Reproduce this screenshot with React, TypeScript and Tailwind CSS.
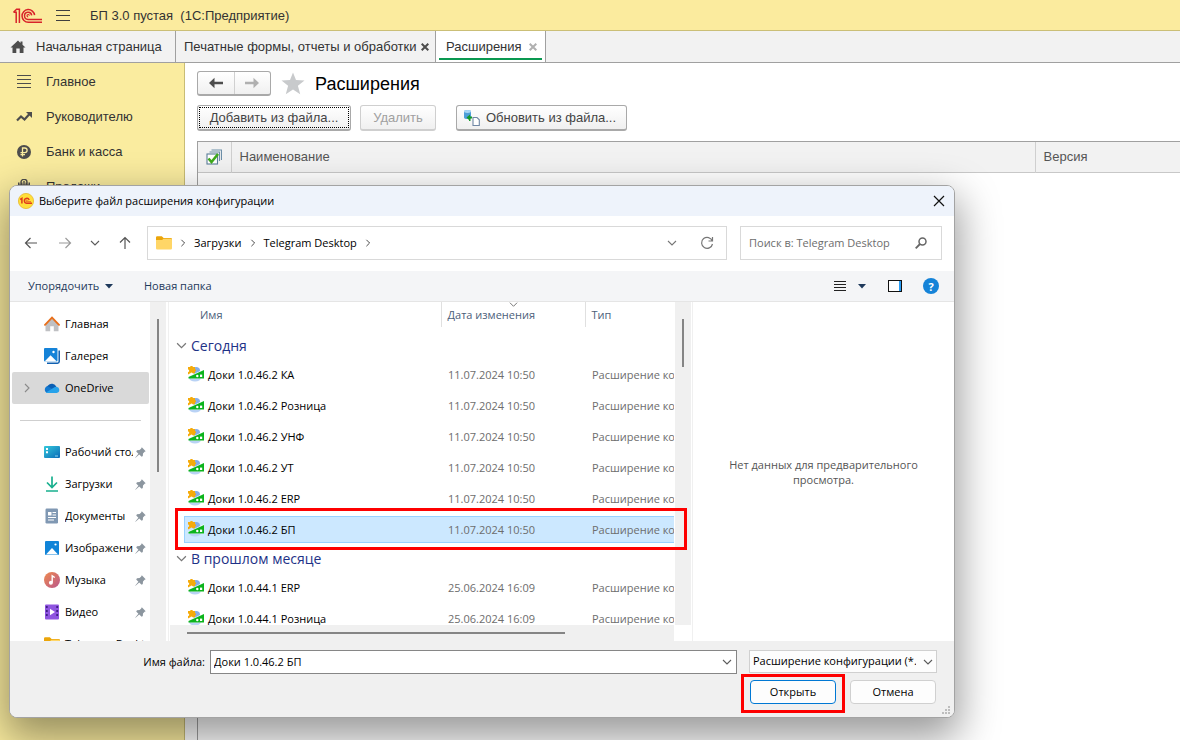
import type { ReactNode } from "react"
import { clsx } from "clsx"

interface FileRow {
  readonly name: string
  readonly date: string
  readonly selected?: boolean
}

interface FileGroup {
  readonly title: string
  readonly files: readonly FileRow[]
}

const GROUPS: readonly FileGroup[] = [
  {
    title: "Сегодня",
    files: [
      { name: "Доки 1.0.46.2 КА", date: "11.07.2024 10:50" },
      { name: "Доки 1.0.46.2 Розница", date: "11.07.2024 10:50" },
      { name: "Доки 1.0.46.2 УНФ", date: "11.07.2024 10:50" },
      { name: "Доки 1.0.46.2 УТ", date: "11.07.2024 10:50" },
      { name: "Доки 1.0.46.2 ERP", date: "11.07.2024 10:50" },
      { name: "Доки 1.0.46.2 БП", date: "11.07.2024 10:50", selected: true },
    ],
  },
  {
    title: "В прошлом месяце",
    files: [
      { name: "Доки 1.0.44.1 ERP", date: "25.06.2024 16:09" },
      { name: "Доки 1.0.44.1 Розница", date: "25.06.2024 16:09" },
    ],
  },
]

/* ---------- icons ---------- */

function Logo1C() {
  return (
    <svg width="30" height="16" viewBox="0 0 30 16" fill="none" stroke="#d8232a" strokeWidth="1.5">
      <path d="M0.5 4.2H3.2V15M0.5 4.2L3.6 1.2H6.4V15" />
      <path d="M21.6 7.2A6.3 6.3 0 1 0 15.3 14.2H29" />
      <path d="M18.7 7.4A3.6 3.6 0 1 0 15.3 11.4H29" />
      <path d="M16.4 7.6A1.2 1.2 0 1 0 15.2 8.9" strokeWidth="1.2" />
    </svg>
  )
}

function Chevron({ dir, size = 10, color = "#5c5c5c" }: { dir: "down" | "up" | "right"; size?: number; color?: string }) {
  const d = { down: "M1 3l4 4 4-4", up: "M1 7l4-4 4 4", right: "M3 1l4 4-4 4" }[dir]
  return (
    <svg width={size} height={size} viewBox="0 0 10 10" fill="none" stroke={color} strokeWidth="1.1">
      <path d={d} />
    </svg>
  )
}

function ThinArrow({ dir, color }: { dir: "left" | "right" | "up"; color: string }) {
  const d = {
    left: "M13 7H1.5M6.5 2L1.5 7l5 5",
    right: "M1 7h11.500M7.500 2l5 5-5 5",
    up: "M7 13V1.5M2 6.500l5-5 5 5",
  }[dir]
  return (
    <svg width="14" height="14" viewBox="0 0 14 14" fill="none" stroke={color} strokeWidth="1.2">
      <path d={d} />
    </svg>
  )
}

function BoldArrow({ flip = false, color }: { flip?: boolean; color: string }) {
  return (
    <svg width="14" height="12" viewBox="0 0 14 12" fill={color}>
      <path d={flip ? "M14 6L8.500 0.800V4.800H0v2.400h8.500v4z" : "M0 6l5.500-5.200V4.800H14v2.400H5.500v4z"} />
    </svg>
  )
}

function Cross({ color }: { color: string }) {
  return (
    <svg width="8" height="8" viewBox="0 0 8 8" stroke={color} strokeWidth="2">
      <path d="M0.700 0.700l6.600 6.600M7.300 0.700L0.700 7.300" />
    </svg>
  )
}

function FolderIcon() {
  return (
    <svg width="16" height="14" viewBox="0 0 16 14" className="shrink-0">
      <path d="M0 1.500A1.200 1.200 0 0 1 1.200 0.300h4.600l1.800 1.700h7.200A1.200 1.200 0 0 1 16 3.200V6H0z" fill="#eba50a" />
      <path d="M0 4h6l1.500-1.300h7.300A1.200 1.200 0 0 1 16 3.900v8.300a1.200 1.200 0 0 1-1.200 1.200H1.200A1.200 1.200 0 0 1 0 12.200z" fill="#ffd667" />
    </svg>
  )
}

function ExtensionIcon() {
  return (
    <svg width="16" height="16" viewBox="0 0 16 16" className="mb-[2px] shrink-0">
      <ellipse cx="7" cy="12" rx="6" ry="3.500" fill="#b9d2f5" />
      <ellipse cx="8" cy="4.500" rx="4" ry="3.500" fill="#86aee8" />
      <path d="M0 10.800L16 3.200v9.400H3z" fill="#fff" />
      <path d="M0.500 10.900L16 4v8.400H0.500z" fill="#0cb41c" />
      <circle cx="9.300" cy="10" r="1.200" fill="#fff" />
      <rect x="12" y="8.600" width="2.200" height="2.400" fill="#fff" />
      <path d="M0 1h2.200a1.300 1.300 0 0 1 2.600 0H7v2a1.400 1.400 0 0 1 0 2.700V7.300H4.600a1.200 1.200 0 0 0-2.200 0L0 8.600V6a1.200 1.200 0 0 0 0-2.400z" fill="#f5ab0b" />
    </svg>
  )
}

function HomeColorIcon() {
  return (
    <svg width="16" height="16" viewBox="0 0 16 16">
      <path d="M1.500 8L8 2l6.500 6v7.300H9.800v-5H6.200v5H1.500z" fill="#bfc0c3" />
      <path d="M1 8.800L8 1.600l7 7.200" fill="none" stroke="#e8701c" strokeWidth="1.900" strokeLinecap="round" />
    </svg>
  )
}

function GalleryIcon() {
  return (
    <svg width="16" height="16" viewBox="0 0 16 16">
      <path d="M3 15.200h10.500a1.700 1.700 0 0 0 1.700-1.700V2.500" fill="none" stroke="#0f5fb0" strokeWidth="1.500" />
      <rect width="13.500" height="13.500" rx="1" fill="#1583d8" />
      <path d="M0.600 13.500l6-6.200 6.200 6.200z" fill="#fff" />
      <circle cx="9.500" cy="4" r="1.200" fill="#fff" />
    </svg>
  )
}

function OneDriveIcon() {
  return (
    <svg width="16" height="16" viewBox="0 0 16 16">
      <path d="M4 12.500A4 4 0 0 1 4 5.500a4.800 4.800 0 0 1 8.300 1.300L8 10z" fill="#0a5fb4" />
      <path d="M3.500 13A3.400 3.400 0 0 1 3.800 6.300L10 10z" fill="#1278cf" />
      <path d="M2 12.400l8-5a4 4 0 0 1 2.600-.7A3.200 3.200 0 0 1 12.700 13H3.700A3 3 0 0 1 2 12.400z" fill="#26a2ea" />
    </svg>
  )
}

function DesktopIcon() {
  return (
    <svg width="16" height="16" viewBox="0 0 16 16">
      <defs>
        <linearGradient id="desk" x1="0" y1="0" x2="1" y2="1">
          <stop offset="0" stopColor="#35c9db" />
          <stop offset="1" stopColor="#0a6ab8" />
        </linearGradient>
      </defs>
      <rect y="2" width="16" height="12" rx="1" fill="url(#desk)" />
      <path d="M2 4h2v2H2zM2 7.300h2v2H2z" fill="#fff" />
      <path d="M11 12h3" stroke="#8fd5f0" strokeWidth="1" />
    </svg>
  )
}

function DownloadIcon() {
  return (
    <svg width="16" height="16" viewBox="0 0 16 16" fill="none" stroke="#19b08f" strokeWidth="1.700">
      <path d="M8 0.500V11M3 6.500l5 5 5-5M2 15h12" />
    </svg>
  )
}

function DocumentsIcon() {
  return (
    <svg width="16" height="16" viewBox="0 0 16 16">
      <rect x="1.500" y="0.500" width="12.500" height="15" rx="1.200" fill="#8098b3" />
      <path d="M4 4h3.500v3.500H4z" fill="#fff" />
      <path d="M8.500 4.500H12M8.500 7H12M4 9.500h8M4 12h6" stroke="#fff" strokeWidth="1" />
    </svg>
  )
}

function PicturesIcon() {
  return (
    <svg width="16" height="16" viewBox="0 0 16 16">
      <rect x="1" y="1" width="14" height="14" rx="1" fill="#1184d8" />
      <path d="M2 14.500L8 8l6 6.500z" fill="#fff" />
      <circle cx="11.500" cy="4.500" r="1.100" fill="#fff" />
    </svg>
  )
}

function MusicIcon() {
  return (
    <svg width="16" height="16" viewBox="0 0 16 16">
      <defs>
        <linearGradient id="mus" x1="0" y1="0" x2="1" y2="1">
          <stop offset="0" stopColor="#ef8a4e" />
          <stop offset="1" stopColor="#b9578d" />
        </linearGradient>
      </defs>
      <circle cx="8" cy="8" r="8" fill="url(#mus)" />
      <path d="M8.200 10.500V3.800l2.600 1.700" fill="none" stroke="#fff" strokeWidth="1.400" />
      <circle cx="6.900" cy="10.700" r="2" fill="#fff" />
    </svg>
  )
}

function VideoIcon() {
  return (
    <svg width="16" height="16" viewBox="0 0 16 16">
      <rect x="1" y="0.500" width="14" height="15" rx="1" fill="#8f55e0" />
      <path d="M2.800 2v12M13.200 2v12" stroke="#3f1f86" strokeWidth="1.800" strokeDasharray="2 2" />
      <path d="M6 4.800v6.400L11 8z" fill="#fff" />
    </svg>
  )
}

function PinIcon() {
  return (
    <svg width="11" height="11" viewBox="0 0 11 11" fill="#8c969f">
      <path d="M6.800 0.300L10.700 4.200 9.600 4.800 8 6.400 7.800 9 6.700 9.800 4.200 7.500 0.600 10.700 0.300 10.400 3.400 6.700 1.200 4.400 2 3.200 4.600 3 6.200 1.400z" />
    </svg>
  )
}

function OneCBadge() {
  return (
    <svg width="16" height="16" viewBox="0 0 16 16">
      <circle cx="8" cy="8" r="7.600" fill="#ffdf3a" stroke="#e8b92b" strokeWidth="0.800" />
      <path d="M2.200 6.500l1.700-1.100v5.200" fill="none" stroke="#e03a1c" strokeWidth="1.500" />
      <path d="M11.200 6.900A2.500 2.500 0 1 0 9 10.300h5" fill="none" stroke="#e03a1c" strokeWidth="1.400" />
      <path d="M9.700 7.500A0.900 0.900 0 1 0 9 8.700h4" fill="none" stroke="#e03a1c" strokeWidth="0.700" />
    </svg>
  )
}

/* ---------- main window ---------- */

const SECTIONS: readonly { label: string; icon: ReactNode }[] = [
  {
    label: "Главное",
    icon: <path d="M1 1.500h14M1 5.500h14M1 9.500h14M1 13.500h14" stroke="#4d4d4d" strokeWidth="1" fill="none" />,
  },
  {
    label: "Руководителю",
    icon: (
      <>
        <path d="M1 11.500l4-4 3.500 3L13.500 5" fill="none" stroke="#4d4d4d" strokeWidth="2.200" />
        <path d="M10 3h6v6z" fill="#4d4d4d" />
      </>
    ),
  },
  {
    label: "Банк и касса",
    icon: (
      <>
        <circle cx="8" cy="8" r="7" fill="#4d4d4d" />
        <path d="M6.500 12.500V4h2.300a2.300 2.300 0 0 1 0 4.600H4.500M4.500 10.600h4.500" fill="none" stroke="#faec9f" strokeWidth="1.300" />
      </>
    ),
  },
  {
    label: "Продажи",
    icon: (
      <>
        <path d="M2 3.500h1.500v2H5v-2h1.500v2h3v-2H11v2h1.500v-2H14V14H2z" fill="#4d4d4d" />
        <path d="M5 6V3a3 2.600 0 0 1 6 0v3M8 2v5" fill="none" stroke="#4d4d4d" strokeWidth="1.400" />
      </>
    ),
  },
]

function TopBar() {
  return (
    <header className="flex h-[31px] items-center border-b border-[#cbbf77] bg-[#fbeb9e] pl-[13px] pt-px">
      <Logo1C />
      <button type="button" aria-label="Меню" className="ml-[13px]">
        <svg width="14" height="12" viewBox="0 0 14 12" stroke="#3f3f3f" strokeWidth="1">
          <path d="M0 0.500h14M0 5.500h14M0 10.500h14" />
        </svg>
      </button>
      <span className="ml-5 whitespace-pre text-[13px] text-[#333]">БП 3.0 пустая  (1С:Предприятие)</span>
    </header>
  )
}

function TabBar() {
  return (
    <nav className="flex h-8 border-b border-[#a0a0a0] bg-[#f2f2f2] text-[13px] text-[#333]">
      <button type="button" className="flex w-44 items-center gap-[10px] whitespace-nowrap border-r border-[#a0a0a0] pl-[10px]">
        <svg width="16" height="14" viewBox="0 0 16 14" fill="#4d4d4d">
          <path d="M8 0.500L0.500 7.500h2V13h3.800V8.500h3.400V13h3.800V7.500h2L12.500 4.700V1.500h-2v1.400z" />
        </svg>
        Начальная страница
      </button>
      <div className="flex w-[260px] items-center justify-between whitespace-nowrap border-r border-[#a0a0a0] pl-2 pr-[6px]">
        <button type="button">Печатные формы, отчеты и обработки</button>
        <button type="button" aria-label="Закрыть вкладку">
          <Cross color="#4d4d4d" />
        </button>
      </div>
      <div className="relative flex w-[110px] items-center justify-between border-r border-[#a0a0a0] bg-white pl-[10px] pr-2">
        <button type="button">Расширения</button>
        <button type="button" aria-label="Закрыть вкладку">
          <Cross color="#b0b0b0" />
        </button>
        <span className="absolute inset-x-[3px] bottom-[2px] h-[2px] bg-[#0a9850]" />
      </div>
    </nav>
  )
}

function Sidebar() {
  return (
    <aside className="w-[185px] shrink-0 border-r border-[#c9bd75] bg-[#faec9f] pt-px">
      {SECTIONS.map((s) => (
        <a key={s.label} href="#" className="flex h-[35px] items-center gap-[14px] pl-4 text-[13px] text-[#333]">
          <svg width="16" height="16" viewBox="0 0 16 16">
            {s.icon}
          </svg>
          {s.label}
        </a>
      ))}
    </aside>
  )
}

const BTN = "flex h-[26px] items-center justify-center whitespace-nowrap rounded-[3px] border border-b-2 bg-linear-to-b from-white to-[#f0f0f0] text-[13px]"

function ExtensionsPage() {
  return (
    <main className="flex min-w-0 flex-1 flex-col bg-white pl-3 pt-2">
      <div className="flex items-center">
        <div className="flex h-[25px] w-[74px] rounded-[3px] border border-b-2 border-[#a9a9a9] bg-linear-to-b from-white to-[#f0f0f0]">
          <button type="button" aria-label="Назад" className="grid flex-1 place-content-center border-r border-[#d0d0d0]">
            <BoldArrow color="#4d4d4d" />
          </button>
          <button type="button" aria-label="Вперед" className="grid flex-1 place-content-center">
            <BoldArrow flip color="#b0b0b0" />
          </button>
        </div>
        <svg width="24" height="23" viewBox="0 0 24 23" fill="#c8cacc" className="ml-[10px]">
          <path d="M12 0.500l3 7.600 8.500.5-6.600 5.200 2.300 8.500L12 17.600l-7.200 4.700 2.300-8.500L0.500 8.600 9 8.100z" />
        </svg>
        <h1 className="ml-[10px] text-[18px] leading-6 text-black">Расширения</h1>
      </div>

      <div className="mt-[9px] flex">
        <button type="button" className={clsx(BTN, "w-[154px] border-[#a9a9a9] p-px text-[#444]")}>
          <span className="flex h-full flex-1 items-center justify-center border border-dotted border-black">
            Добавить из файла...
          </span>
        </button>
        <button type="button" disabled className={clsx(BTN, "ml-[9px] w-[76px] border-[#cfcfcf] text-[#a0a0a0]")}>
          Удалить
        </button>
        <button type="button" className={clsx(BTN, "ml-5 w-[171px] gap-[6px] border-[#a9a9a9] pr-1 text-[#444]")}>
          <svg width="17" height="17" viewBox="0 0 17 17">
            <path d="M1 2.500c0-2 7-2 7 0v6c0 2-7 2-7 0z" fill="#4d9ed8" />
            <ellipse cx="4.500" cy="2.500" rx="3.500" ry="1.400" fill="#a9d6f5" />
            <path d="M10 8.500h4l2.300 2.300v5.700H10z" fill="#fff" stroke="#6f87a5" strokeWidth="1.100" />
            <path d="M3.500 8.500L7 5.500v2h2v2H7.500V12l-1.500 0v-1z" fill="#159a2c" />
          </svg>
          Обновить из файла...
        </button>
      </div>

      <div className="mt-[10px] flex-1 border-l border-t border-[#a0a0a0]">
        <table className="w-full table-fixed border-collapse text-left text-[13px] text-[#555]">
          <thead>
            <tr className="h-[30px] border-b border-[#c8c8c8] bg-[#f2f2f2]">
              <th className="w-[33px] border-r border-[#cfcfcf] p-0 font-normal">
                <svg width="16" height="16" viewBox="0 0 16 16" className="mx-auto">
                  <path d="M5.500 1h10v10M3.500 3h10v9" fill="none" stroke="#6d8fa8" strokeWidth="1.100" />
                  <rect x="1" y="5" width="10.500" height="10" fill="#fff" stroke="#5c7f9a" strokeWidth="1.100" />
                  <path d="M2.500 9.500l3 3.500L12 5" fill="none" stroke="#3faa1c" strokeWidth="2.600" />
                </svg>
              </th>
              <th className="border-r border-[#cfcfcf] p-0 pl-2 font-normal">Наименование</th>
              <th className="w-[145px] p-0 pl-2 font-normal">Версия</th>
            </tr>
          </thead>
        </table>
      </div>
    </main>
  )
}

/* ---------- file dialog ---------- */

function AddressBar() {
  return (
    <div className="flex h-[55px] items-center gap-[10px] pb-px pl-[9px] pr-3">
      <button type="button" aria-label="Назад" className="grid w-6 place-content-center">
        <ThinArrow dir="left" color="#555" />
      </button>
      <button type="button" aria-label="Вперед" className="grid w-6 place-content-center">
        <ThinArrow dir="right" color="#9a9a9a" />
      </button>
      <button type="button" aria-label="Последние расположения" className="grid w-4 place-content-center">
        <Chevron dir="down" />
      </button>
      <button type="button" aria-label="Вверх" className="grid w-6 place-content-center">
        <ThinArrow dir="up" color="#555" />
      </button>
      <div className="flex h-[34px] min-w-0 flex-1 items-center gap-[7px] border border-[#d9d9d9] px-2">
        <FolderIcon />
        <Chevron dir="right" size={8} color="#333" />
        <button type="button">Загрузки</button>
        <Chevron dir="right" size={8} color="#333" />
        <button type="button">Telegram Desktop</button>
        <Chevron dir="right" size={8} color="#333" />
        <button type="button" aria-label="История" className="ml-auto">
          <Chevron dir="down" color="#777" />
        </button>
        <button type="button" aria-label="Обновить" className="ml-4 mr-1">
          <svg width="14" height="14" viewBox="0 0 14 14" fill="none" stroke="#777" strokeWidth="1.200">
            <path d="M12.300 5A5.500 5.500 0 1 0 12.500 8M12.500 1v4H8.500" />
          </svg>
        </button>
      </div>
      <label className="ml-[3px] flex h-[34px] w-[202px] items-center border border-[#d9d9d9] pl-2 pr-[14px]">
        <input
          type="search"
          aria-label="Поиск"
          placeholder="Поиск в: Telegram Desktop"
          className="min-w-0 flex-1 outline-none placeholder:text-[#6d6d6d]"
        />
        <svg width="12" height="12" viewBox="0 0 12 12" fill="none" stroke="#666" strokeWidth="1.500">
          <circle cx="7.500" cy="4.500" r="3.500" />
          <path d="M5 7L0.700 11.300" strokeWidth="1.800" />
        </svg>
      </label>
    </div>
  )
}

function Toolbar() {
  return (
    <div className="flex h-[31px] items-center border-b border-[#e5e5e5] bg-[#f4f5f7] pl-[18px] pr-[15px] text-[#1e395b]">
      <button type="button" className="flex w-[116px] items-center gap-[6px]">
        Упорядочить
        <svg width="8" height="5" viewBox="0 0 8 5" fill="#1e395b">
          <path d="M0 0h8L4 4.500z" />
        </svg>
      </button>
      <button type="button">Новая папка</button>
      <button type="button" aria-label="Вид" className="ml-auto flex items-center gap-3">
        <svg width="12" height="11" viewBox="0 0 12 11" stroke="#222" strokeWidth="1">
          <path d="M0 0.500h12M0 3.500h12M0 6.500h12M0 9.500h12" />
        </svg>
        <svg width="8" height="5" viewBox="0 0 8 5" fill="#1e395b">
          <path d="M0 0h8L4 4.500z" />
        </svg>
      </button>
      <button type="button" aria-label="Область просмотра" className="ml-[22px]">
        <svg width="14" height="12" viewBox="0 0 14 12">
          <rect x="0.500" y="0.500" width="13" height="11" fill="#fff" stroke="#111" />
          <path d="M11 1h2v10h-2z" fill="#2a9df4" />
        </svg>
      </button>
      <button
        type="button"
        aria-label="Справка"
        className="ml-[21px] grid size-4 place-content-center rounded-full bg-[#1583d8] text-[11px] font-bold leading-none text-white"
      >
        ?
      </button>
    </div>
  )
}

function NavItem({
  icon,
  label,
  pinned = false,
  active = false,
}: {
  icon: ReactNode
  label: string
  pinned?: boolean
  active?: boolean
}) {
  return (
    <a
      href="#"
      className={clsx("relative ml-[2px] flex h-8 items-center rounded-[2px] pl-8", active && "bg-[#d9d9d9]")}
    >
      {active && (
        <span className="absolute left-[10px]">
          <Chevron dir="right" color="#8a8a8a" />
        </span>
      )}
      <span className="shrink-0">{icon}</span>
      <span className="ml-[5px] w-[68px] shrink-0 overflow-hidden whitespace-nowrap">{label}</span>
      {pinned && (
        <span className="ml-[2px] shrink-0">
          <PinIcon />
        </span>
      )}
    </a>
  )
}

function NavPane() {
  return (
    <div className="flex w-[156px] shrink-0">
      <nav className="w-[139px] overflow-hidden pt-[6px]">
        <NavItem icon={<HomeColorIcon />} label="Главная" />
        <NavItem icon={<GalleryIcon />} label="Галерея" />
        <NavItem icon={<OneDriveIcon />} label="OneDrive" active />
        <div className="flex h-8 items-center pl-[10px] pr-2">
          <hr className="w-full border-[#cfcfcf]" />
        </div>
        <NavItem icon={<DesktopIcon />} label="Рабочий стол" pinned />
        <NavItem icon={<DownloadIcon />} label="Загрузки" pinned />
        <NavItem icon={<DocumentsIcon />} label="Документы" pinned />
        <NavItem icon={<PicturesIcon />} label="Изображения" pinned />
        <NavItem icon={<MusicIcon />} label="Музыка" pinned />
        <NavItem icon={<VideoIcon />} label="Видео" pinned />
        <a href="#" className="ml-[2px] flex h-8 items-center gap-[5px] whitespace-nowrap pl-8">
          <FolderIcon />
          Telegram Desktop
        </a>
      </nav>
      <div className="ml-px w-4 bg-[#f0f0f0] pt-[17px]">
        <div className="mx-auto h-[153px] w-[2px] bg-[#858585]" />
      </div>
    </div>
  )
}

function FileCell({ icon, selected = false, children }: { icon?: ReactNode; selected?: boolean; children: ReactNode }) {
  return (
    <td className={clsx("overflow-hidden p-0", icon && "pl-[14px]")}>
      <div
        className={clsx(
          "flex h-[27px] items-center whitespace-nowrap border-y",
          icon ? "gap-1 border-l pl-[3px] text-black" : "pl-[7px] text-[#6d6d6d]",
          selected ? "border-[#99d1ff] bg-[#cce8ff]" : "border-transparent",
        )}
      >
        {icon}
        <span className="pt-[2px]">{children}</span>
      </div>
    </td>
  )
}

function FileTable() {
  return (
    <table className="w-full table-fixed border-collapse text-left">
      <colgroup>
        <col className="w-[271px]" />
        <col className="w-36" />
        <col />
      </colgroup>
      <thead>
        <tr className="h-[25px] text-[#4c607a]">
          <th className="p-0 pl-[30px] pt-[2px] font-normal">Имя</th>
          <th className="relative border-l border-[#e0e0e0] p-0 pl-[6px] pt-[2px] font-normal">
            Дата изменения
            <span className="absolute left-[67px] top-[-2px]">
              <Chevron dir="down" size={9} color="#777" />
            </span>
          </th>
          <th className="border-l border-[#e0e0e0] p-0 pl-[6px] pt-[2px] font-normal">Тип</th>
        </tr>
      </thead>
      {GROUPS.map((g, i) => (
        <tbody key={g.title}>
          <tr className={i === 0 ? "h-8" : "h-[27px]"}>
            <th colSpan={3} className="p-0 pl-[6px] align-bottom font-normal">
              <span className="flex h-[27px] items-center gap-1 text-[14px] text-[#1e3287]">
                <Chevron dir="down" size={11} color="#777" />
                {g.title}
              </span>
            </th>
          </tr>
          {g.files.map((f) => (
            <tr key={f.name} className="h-[31px]">
              <FileCell icon={<ExtensionIcon />} selected={f.selected}>
                {f.name}
              </FileCell>
              <FileCell selected={f.selected}>{f.date}</FileCell>
              <FileCell selected={f.selected}>Расширение конфигурации</FileCell>
            </tr>
          ))}
        </tbody>
      ))}
    </table>
  )
}

function FilePane() {
  return (
    <div className="relative ml-[2px] flex min-w-0 flex-1 border-l border-[#f0f0f0] pl-px">
      <div className="flex min-w-0 flex-1 flex-col">
        <div className="min-h-0 flex-1 overflow-hidden">
          <FileTable />
        </div>
        <div className="flex h-4 items-center bg-[#f0f0f0] pl-[17px]">
          <div className="h-[2px] w-[378px] bg-[#858585]" />
        </div>
      </div>
      <div className="mb-4 ml-px w-4 bg-[#f0f0f0] pt-[17px]">
        <div className="mx-auto h-12 w-[2px] bg-[#858585]" />
      </div>
      <div className="pointer-events-none absolute left-[6px] right-1 top-[206px] h-[42px] border-3 border-[#fe0000]" />
    </div>
  )
}

function DialogFooter() {
  return (
    <footer className="bg-[#f0f0f0] pb-[13px] pt-[9px]">
      <div className="flex pr-[17px]">
        <label htmlFor="file-name" className="w-[195px] self-center text-right">
          Имя файла:
        </label>
        <div className="ml-[5px] flex h-6 min-w-0 flex-1 items-center border border-[#868686] bg-white pl-[3px] pr-1">
          <input id="file-name" defaultValue="Доки 1.0.46.2 БП" className="min-w-0 flex-1 outline-none" />
          <Chevron dir="down" />
        </div>
        <div className="relative ml-3 w-[188px]">
          <select
            aria-label="Тип файла"
            className="h-[23px] w-full appearance-none overflow-hidden border border-[#d0d0d0] bg-[#fdfdfd] pl-[3px] pr-5"
          >
            <option>Расширение конфигурации (*.cfe)</option>
          </select>
          <span className="pointer-events-none absolute right-1 top-[7px]">
            <Chevron dir="down" />
          </span>
        </div>
      </div>
      <div className="mt-[6px] flex justify-end gap-[14px] pr-[18px]">
        <div className="relative">
          <button type="button" className="h-6 w-[86px] rounded-[4px] border border-[#0078d4] bg-[#fdfdfd]">
            Открыть
          </button>
          <span className="pointer-events-none absolute -inset-x-[9px] -bottom-[9px] -top-[6px] border-3 border-[#fe0000]" />
        </div>
        <button type="button" className="h-6 w-[86px] rounded-[4px] border border-[#d0d0d0] bg-[#fdfdfd]">
          Отмена
        </button>
      </div>
      <svg width="9" height="9" viewBox="0 0 9 9" fill="#bdbdbd" className="absolute bottom-[2px] right-[3px]">
        <path d="M6 0h2v2H6zM3 3h2v2H3zM6 3h2v2H6zM0 6h2v2H0zM3 6h2v2H3zM6 6h2v2H6z" />
      </svg>
    </footer>
  )
}

function FileDialog() {
  return (
    <section
      role="dialog"
      aria-labelledby="dialog-title"
      className="absolute left-[9px] right-[225px] top-[185px] overflow-clip rounded-[8px] border border-[#a3a3a3] bg-white font-['Open_Sans','Noto_Sans',sans-serif] text-[11px] text-black shadow-[0_16px_40px_4px_#00000066]"
    >
      <header className="flex h-[30px] items-center bg-[#eef3fb] pl-2 pr-[9px]">
        <OneCBadge />
        <h2 id="dialog-title" className="ml-[5px]">
          Выберите файл расширения конфигурации
        </h2>
        <button type="button" aria-label="Закрыть" className="ml-auto">
          <svg width="12" height="12" viewBox="0 0 12 12" stroke="#111" strokeWidth="1.200">
            <path d="M1 1l10 10M11 1L1 11" />
          </svg>
        </button>
      </header>
      <AddressBar />
      <Toolbar />
      <div className="flex h-[339px]">
        <NavPane />
        <FilePane />
        <div className="ml-px flex w-[262px] shrink-0 items-center justify-center border-l border-[#f0f0f0] px-8 text-center leading-[15px] text-[#555]">
          Нет данных для предварительного просмотра.
        </div>
      </div>
      <DialogFooter />
    </section>
  )
}

export default function App() {
  return (
    <div className="relative flex min-h-screen flex-col overflow-hidden bg-white font-['Liberation_Sans',Arial,sans-serif]">
      <TopBar />
      <TabBar />
      <div className="flex flex-1">
        <Sidebar />
        <ExtensionsPage />
      </div>
      <FileDialog />
    </div>
  )
}
